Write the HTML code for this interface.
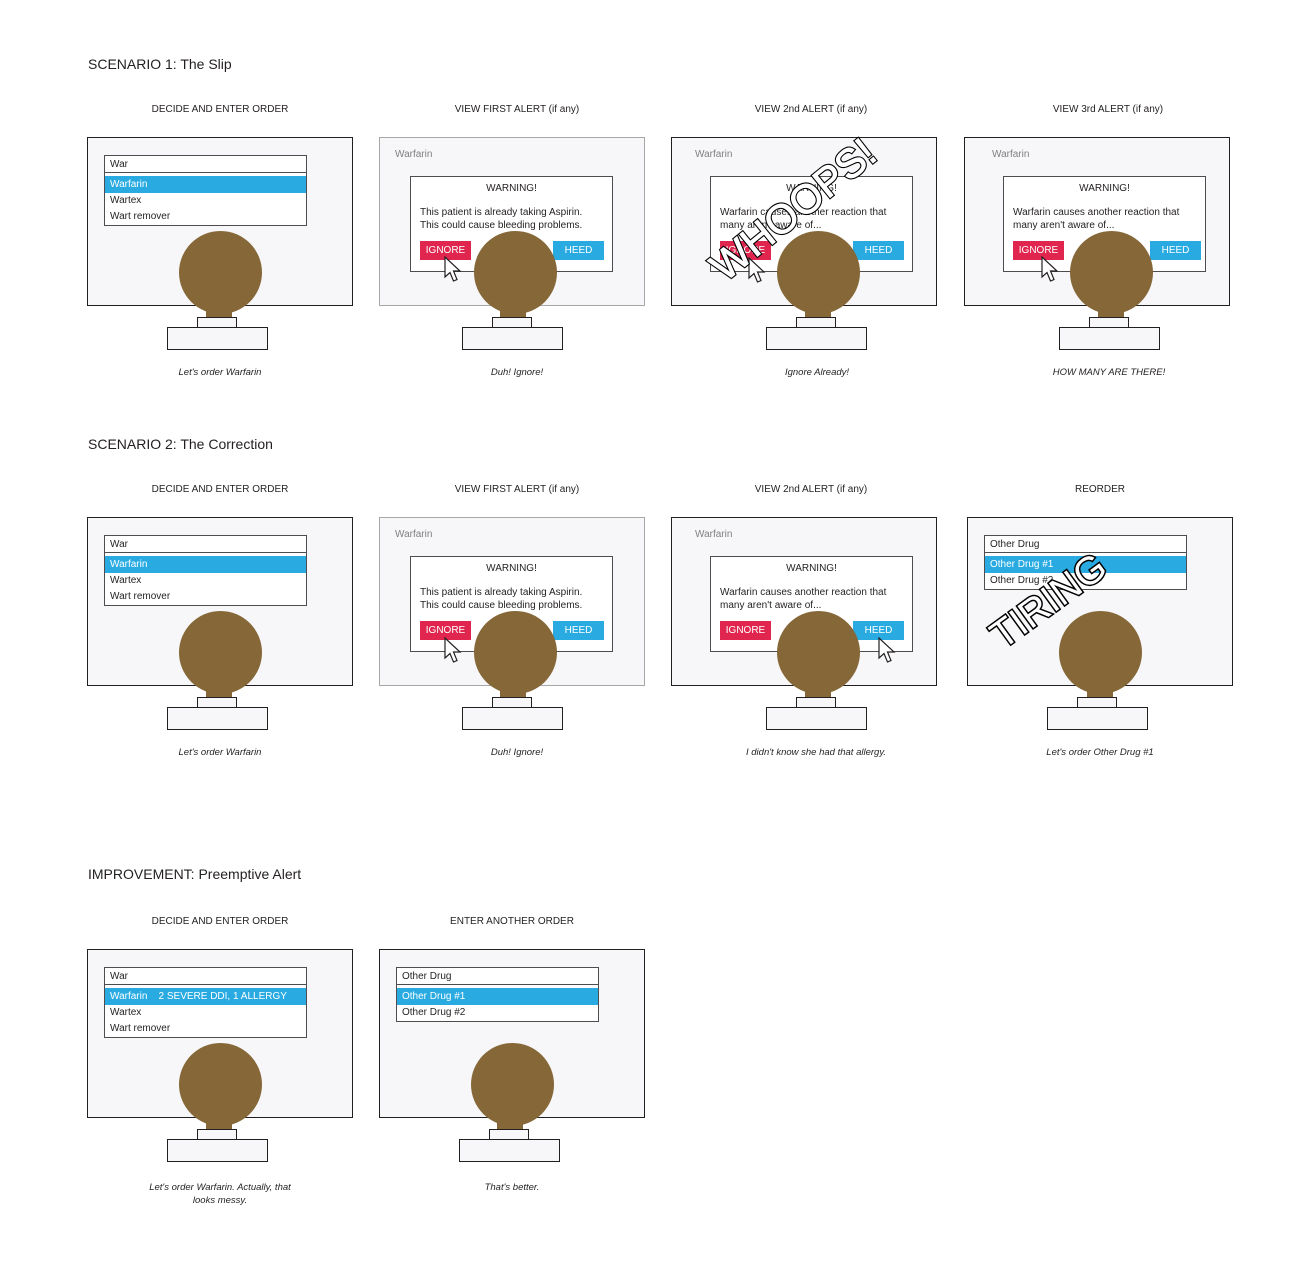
<!DOCTYPE html>
<html><head><meta charset="utf-8"><style>
body{margin:0;width:1312px;height:1281px;background:#fff;position:relative;font-family:"Liberation Sans",sans-serif;color:#231f20;overflow:hidden}
div,span{position:absolute;box-sizing:border-box}
.h{font-size:14px;left:88px}
.t{font-size:10px;width:300px;text-align:center}
.cap{font-size:9.5px;font-style:italic;width:300px;text-align:center;line-height:13px}
.mon{width:266px;height:169px;border:1px solid #231f20;background:#f7f7f9}
.mon.g{border-color:#a7a7a7}
.head{width:83px;height:83px;border-radius:50%;background:#856738}
.neck{width:26px;height:14px;background:#856738}
.stand{width:40px;height:11px;border:1px solid #231f20;background:#f7f7f9}
.base{width:101px;height:23px;border:1px solid #231f20;background:#f7f7f9}
.dd{width:203px;border:1px solid #4d4d4f;background:#fff;font-size:10px}
.dd .in{position:relative;height:17px;border-bottom:1px solid #4d4d4f;padding:3px 5px}
.dd .sel{position:relative;margin-top:3px;height:17px;background:#29abe2;color:#fff;padding:3px 5px}
.dd .it{position:relative;height:16px;padding:2px 5px}
.lbl{font-size:10px;color:#808080}
.dlg{width:203px;height:96px;border:1px solid #4d4d4f;background:#fff;font-size:10px}
.dlg .w{left:0;width:100%;text-align:center;top:6px}
.dlg .tx{left:9px;top:29px;line-height:13px;white-space:nowrap}
.btn{width:51px;height:19px;color:#fff;font-size:10px;text-align:center;line-height:19px}
.ig{background:#e0264f}.hd{background:#29abe2}
</style></head><body>

<div class="h" style="top:56px">SCENARIO 1: The Slip</div>
<div class="h" style="top:436px">SCENARIO 2: The Correction</div>
<div class="h" style="top:866px">IMPROVEMENT: Preemptive Alert</div>

<div class="t" style="left:70px;top:104px">DECIDE AND ENTER ORDER</div>
<div class="t" style="left:367px;top:104px">VIEW FIRST ALERT (if any)</div>
<div class="t" style="left:661px;top:104px">VIEW 2nd ALERT (if any)</div>
<div class="t" style="left:958px;top:104px">VIEW 3rd ALERT (if any)</div>
<div class="t" style="left:70px;top:484px">DECIDE AND ENTER ORDER</div>
<div class="t" style="left:367px;top:484px">VIEW FIRST ALERT (if any)</div>
<div class="t" style="left:661px;top:484px">VIEW 2nd ALERT (if any)</div>
<div class="t" style="left:950px;top:484px">REORDER</div>
<div class="t" style="left:70px;top:916px">DECIDE AND ENTER ORDER</div>
<div class="t" style="left:362px;top:916px">ENTER ANOTHER ORDER</div>

<div class="mon" style="left:87px;top:137px"></div>
<div class="dd" style="left:104px;top:155px"><div class="in">War</div><div class="sel">Warfarin</div><div class="it">Wartex</div><div class="it">Wart remover</div></div>

<div class="mon g" style="left:379px;top:137px"></div>
<div class="lbl" style="left:395px;top:149px">Warfarin</div>
<div class="dlg" style="left:410px;top:176px"><div class="w">WARNING!</div><div class="tx">This patient is already taking Aspirin.<br>This could cause bleeding problems.</div></div>
<div class="btn ig" style="left:420px;top:241px">IGNORE</div><div class="btn hd" style="left:553px;top:241px">HEED</div>

<div class="mon" style="left:671px;top:137px"></div>
<div class="lbl" style="left:695px;top:149px">Warfarin</div>
<div class="dlg" style="left:710px;top:176px"><div class="w">WARNING!</div><div class="tx">Warfarin causes another reaction that<br>many aren't aware of...</div></div>
<div class="btn ig" style="left:720px;top:241px">IGNORE</div><div class="btn hd" style="left:853px;top:241px">HEED</div>

<div class="mon" style="left:964px;top:137px"></div>
<div class="lbl" style="left:992px;top:149px">Warfarin</div>
<div class="dlg" style="left:1003px;top:176px"><div class="w">WARNING!</div><div class="tx">Warfarin causes another reaction that<br>many aren't aware of...</div></div>
<div class="btn ig" style="left:1013px;top:241px">IGNORE</div><div class="btn hd" style="left:1150px;top:241px">HEED</div>

<div class="mon" style="left:87px;top:517px"></div>
<div class="dd" style="left:104px;top:535px"><div class="in">War</div><div class="sel">Warfarin</div><div class="it">Wartex</div><div class="it">Wart remover</div></div>

<div class="mon g" style="left:379px;top:517px"></div>
<div class="lbl" style="left:395px;top:529px">Warfarin</div>
<div class="dlg" style="left:410px;top:556px"><div class="w">WARNING!</div><div class="tx">This patient is already taking Aspirin.<br>This could cause bleeding problems.</div></div>
<div class="btn ig" style="left:420px;top:621px">IGNORE</div><div class="btn hd" style="left:553px;top:621px">HEED</div>

<div class="mon" style="left:671px;top:517px"></div>
<div class="lbl" style="left:695px;top:529px">Warfarin</div>
<div class="dlg" style="left:710px;top:556px"><div class="w">WARNING!</div><div class="tx">Warfarin causes another reaction that<br>many aren't aware of...</div></div>
<div class="btn ig" style="left:720px;top:621px">IGNORE</div><div class="btn hd" style="left:853px;top:621px">HEED</div>

<div class="mon" style="left:967px;top:517px"></div>
<div class="dd" style="left:984px;top:535px"><div class="in">Other Drug</div><div class="sel">Other Drug #1</div><div class="it">Other Drug #2</div></div>

<div class="mon" style="left:87px;top:949px"></div>
<div class="dd" style="left:104px;top:967px"><div class="in">War</div><div class="sel">Warfarin&nbsp;&nbsp;&nbsp; 2 SEVERE DDI, 1 ALLERGY</div><div class="it">Wartex</div><div class="it">Wart remover</div></div>

<div class="mon" style="left:379px;top:949px"></div>
<div class="dd" style="left:396px;top:967px"><div class="in">Other Drug</div><div class="sel">Other Drug #1</div><div class="it">Other Drug #2</div></div>

<div class="head" style="left:179px;top:231px"></div><div class="neck" style="left:206px;top:304px"></div><div class="stand" style="left:197px;top:317px"></div><div class="base" style="left:167px;top:327px"></div>
<div class="head" style="left:474px;top:231px"></div><div class="neck" style="left:500px;top:304px"></div><div class="stand" style="left:492px;top:317px"></div><div class="base" style="left:462px;top:327px"></div>
<div class="head" style="left:777px;top:231px"></div><div class="neck" style="left:805px;top:304px"></div><div class="stand" style="left:796px;top:317px"></div><div class="base" style="left:766px;top:327px"></div>
<div class="head" style="left:1070px;top:231px"></div><div class="neck" style="left:1098px;top:304px"></div><div class="stand" style="left:1089px;top:317px"></div><div class="base" style="left:1059px;top:327px"></div>

<div class="head" style="left:179px;top:611px"></div><div class="neck" style="left:206px;top:684px"></div><div class="stand" style="left:197px;top:697px"></div><div class="base" style="left:167px;top:707px"></div>
<div class="head" style="left:474px;top:611px"></div><div class="neck" style="left:500px;top:684px"></div><div class="stand" style="left:492px;top:697px"></div><div class="base" style="left:462px;top:707px"></div>
<div class="head" style="left:777px;top:611px"></div><div class="neck" style="left:805px;top:684px"></div><div class="stand" style="left:796px;top:697px"></div><div class="base" style="left:766px;top:707px"></div>
<div class="head" style="left:1059px;top:611px"></div><div class="neck" style="left:1087px;top:684px"></div><div class="stand" style="left:1077px;top:697px"></div><div class="base" style="left:1047px;top:707px"></div>

<div class="head" style="left:179px;top:1043px"></div><div class="neck" style="left:206px;top:1116px"></div><div class="stand" style="left:197px;top:1129px"></div><div class="base" style="left:167px;top:1139px"></div>
<div class="head" style="left:471px;top:1043px"></div><div class="neck" style="left:497px;top:1116px"></div><div class="stand" style="left:489px;top:1129px"></div><div class="base" style="left:459px;top:1139px"></div>

<svg style="position:absolute;left:444px;top:256px" width="18" height="30" viewBox="0 0 18 30"><path d="M1 1 L1 21 L6 16.5 L9.5 25 L13 23.5 L9.5 15 L16 15 Z" fill="#fff" stroke="#231f20" stroke-width="1.2"/></svg>
<svg style="position:absolute;left:748px;top:257px" width="18" height="30" viewBox="0 0 18 30"><path d="M1 1 L1 21 L6 16.5 L9.5 25 L13 23.5 L9.5 15 L16 15 Z" fill="#fff" stroke="#231f20" stroke-width="1.2"/></svg>
<svg style="position:absolute;left:1041px;top:256px" width="18" height="30" viewBox="0 0 18 30"><path d="M1 1 L1 21 L6 16.5 L9.5 25 L13 23.5 L9.5 15 L16 15 Z" fill="#fff" stroke="#231f20" stroke-width="1.2"/></svg>
<svg style="position:absolute;left:444px;top:637px" width="18" height="30" viewBox="0 0 18 30"><path d="M1 1 L1 21 L6 16.5 L9.5 25 L13 23.5 L9.5 15 L16 15 Z" fill="#fff" stroke="#231f20" stroke-width="1.2"/></svg>
<svg style="position:absolute;left:878px;top:637px" width="18" height="30" viewBox="0 0 18 30"><path d="M1 1 L1 21 L6 16.5 L9.5 25 L13 23.5 L9.5 15 L16 15 Z" fill="#fff" stroke="#231f20" stroke-width="1.2"/></svg>

<svg style="position:absolute;left:660px;top:120px" width="260" height="180"><text x="0" y="0" font-family="Liberation Sans" font-size="41" text-anchor="middle" dominant-baseline="middle" fill="#fff" stroke="#000" stroke-width="3" paint-order="stroke" style="transform:translate(135px,92px) rotate(-39deg)">WHOOPS!</text><text x="0" y="0" font-family="Liberation Sans" font-size="41" text-anchor="middle" dominant-baseline="middle" fill="none" stroke="#fff" stroke-width="0.8" style="transform:translate(135px,92px) rotate(-39deg)">WHOOPS!</text></svg>
<svg style="position:absolute;left:960px;top:520px" width="200" height="150"><text x="0" y="0" font-family="Liberation Sans" font-size="39" text-anchor="middle" dominant-baseline="middle" fill="#fff" stroke="#000" stroke-width="3" paint-order="stroke" style="transform:translate(90px,83px) rotate(-36deg)">TIRING</text></svg>

<div class="cap" style="left:70px;top:366px">Let's order Warfarin</div>
<div class="cap" style="left:367px;top:366px">Duh! Ignore!</div>
<div class="cap" style="left:667px;top:366px">Ignore Already!</div>
<div class="cap" style="left:959px;top:366px">HOW MANY ARE THERE!</div>
<div class="cap" style="left:70px;top:746px">Let's order Warfarin</div>
<div class="cap" style="left:367px;top:746px">Duh! Ignore!</div>
<div class="cap" style="left:666px;top:746px">I didn't know she had that allergy.</div>
<div class="cap" style="left:950px;top:746px">Let's order Other Drug #1</div>
<div class="cap" style="left:70px;top:1181px">Let's order Warfarin. Actually, that<br>looks messy.</div>
<div class="cap" style="left:362px;top:1181px">That's better.</div>
</body></html>
